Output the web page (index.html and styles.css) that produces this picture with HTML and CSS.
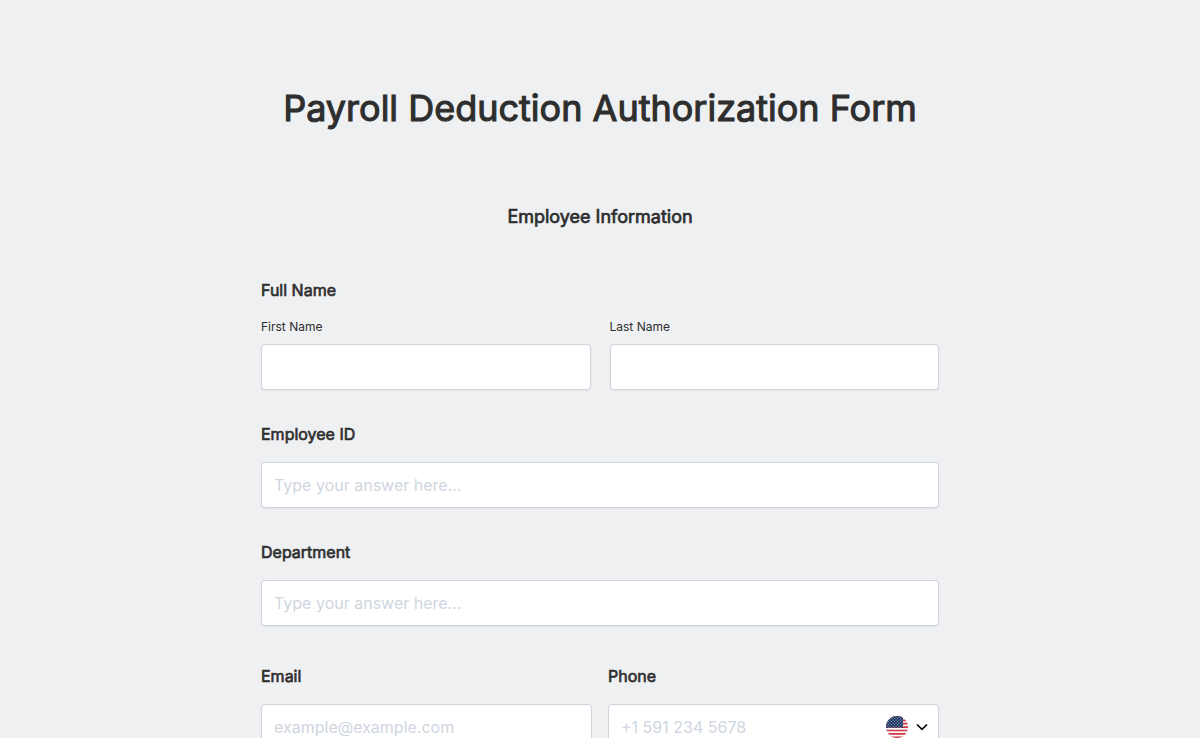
FILE: index.html
```html
<!DOCTYPE html>
<html lang="en">
<head>
<meta charset="utf-8">
<meta name="viewport" content="width=device-width, initial-scale=1">
<title>Payroll Deduction Authorization Form</title>
<link rel="stylesheet" href="styles.css">
</head>
<body>
<form class="form">
  <h1 class="title">Payroll Deduction Authorization Form</h1>
  <h2 class="section-title">Employee Information</h2>
  <fieldset class="field name-field">
    <legend class="label">Full Name</legend>
    <div class="row name-row">
      <div class="cell">
        <label class="sublabel" for="first">First Name</label>
        <input class="input" id="first" type="text">
      </div>
      <div class="cell">
        <label class="sublabel" for="last">Last Name</label>
        <input class="input" id="last" type="text">
      </div>
    </div>
  </fieldset>
  <div class="field">
    <label class="label" for="employee-id">Employee ID</label>
    <input class="input" id="employee-id" type="text" placeholder="Type your answer here...">
  </div>
  <div class="field">
    <label class="label" for="department">Department</label>
    <input class="input" id="department" type="text" placeholder="Type your answer here...">
  </div>
  <div class="row contact-row">
    <div class="cell">
      <label class="label" for="email">Email</label>
      <input class="input" id="email" type="email" placeholder="example@example.com">
    </div>
    <div class="cell">
      <label class="label" for="phone">Phone</label>
      <div class="input phone-box">
        <input class="phone-input" id="phone" type="tel" placeholder="+1 591 234 5678">
        <button class="country" type="button" aria-label="Country: United States">
          <svg class="flag" viewBox="0 0 22 22" aria-hidden="true">
            <defs>
              <clipPath id="disc"><circle cx="11" cy="11" r="11"/></clipPath>
              <pattern id="stars" width="3" height="3" patternUnits="userSpaceOnUse">
                <rect width="3" height="3" fill="#1f3564"/>
                <circle cx="1" cy="1" r=".6" fill="#c5cede"/>
                <circle cx="2.5" cy="2.5" r=".5" fill="#a3b0ca"/>
              </pattern>
            </defs>
            <g clip-path="url(#disc)">
              <rect width="22" height="22" fill="#f8f5f5"/>
              <path d="M0 .9h22M0 4.3h22M0 7.7h22M0 11.1h22M0 14.5h22M0 17.9h22M0 21.3h22" stroke="#cf3a48" stroke-width="1.7"/>
              <rect width="17" height="11.7" fill="url(#stars)"/>
            </g>
          </svg>
          <svg class="chevron" viewBox="0 0 12 8" aria-hidden="true"><path d="M1 1.5 6 6.4l5-4.9" fill="none" stroke="#000" stroke-width="1.6"/></svg>
        </button>
      </div>
    </div>
  </div>
</form>
</body>
</html>
```
FILE: styles.css
```css
* { box-sizing: border-box; }
body {
  margin: 0;
  background: #eef0f2;
  color: #2e2e2e;
  font-family: Inter, "Liberation Sans", sans-serif;
  font-size: 16px;
  line-height: 24px;
}
.form {
  max-width: 710px;
  margin: 0 auto;
  padding: 84px 16px 32px;
}
.title, .section-title, .label {
  font-weight: 400;
  -webkit-text-stroke: 0.04em currentColor;
}
.title {
  margin: 0;
  font-size: 36px;
  line-height: 48px;
  text-align: center;
  -webkit-text-stroke-width: 0.03em;
}
.section-title {
  margin: 73px 0 49px;
  font-size: 18px;
  line-height: 24px;
  text-align: center;
}
.field {
  margin: 0 0 32px;
  padding: 0;
  border: 0;
}
.label {
  display: block;
  margin-bottom: 16px;
  padding: 0;
}
.row { display: flex; }
.cell { flex: 1; min-width: 0; }
.name-row { gap: 19px; }
.contact-row { gap: 16px; padding-top: 6px; }
.sublabel {
  display: block;
  padding-top: 1px;
  margin-bottom: 9px;
  font-size: 12px;
  line-height: 16px;
}
.input {
  display: block;
  width: 100%;
  height: 46px;
  padding: 0 12px;
  border: 1px solid #cfd4de;
  border-radius: 4px;
  background: #fff;
  box-shadow: 0 1px 2px rgba(0, 0, 0, 0.06);
  color: inherit;
  font: inherit;
}
.input::placeholder, .phone-input::placeholder { color: #cfd6df; opacity: 1; }
.phone-box {
  display: flex;
  align-items: center;
  padding-right: 10px;
}
.phone-input {
  flex: 1;
  min-width: 0;
  padding: 0;
  border: 0;
  outline: 0;
  background: transparent;
  color: inherit;
  font: inherit;
}
.country {
  display: flex;
  align-items: center;
  gap: 8px;
  padding: 0;
  border: 0;
  background: transparent;
}
.flag { width: 22px; height: 22px; }
.chevron { width: 12px; height: 8px; }
```
